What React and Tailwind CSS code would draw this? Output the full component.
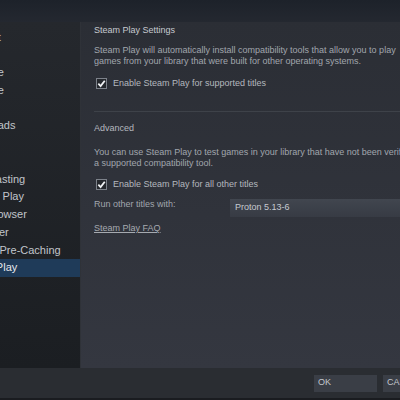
import React from 'react'

const sections = [
  'Account',
  'Family',
  'In-Game',
  'Interface',
  'Library',
  'Downloads',
  'Cloud',
  'Voice',
  'Broadcasting',
  'Remote Play',
  'Web Browser',
  'Controller',
  'Shader Pre-Caching',
  'Steam Play',
]

function Check() {
  return (
    <span className="ml-[2px] mr-[6px] flex h-[11px] w-[11px] items-center justify-center border border-[#7d828a] bg-[#25282d]">
      <svg width="9" height="9" viewBox="0 0 10 10">
        <path d="M1.5 5.2 L4 7.8 L8.6 2" fill="none" stroke="#f2f4f6" strokeWidth="2" />
      </svg>
    </span>
  )
}

export default function App() {
  return (
    <div className="h-[400px] w-[400px] overflow-hidden bg-[#1c1f23] font-['Liberation_Sans',Arial,sans-serif]">
      <div className="-ml-[45px] flex h-[400px] w-[500px] flex-col">
        {/* title bar */}
        <div className="h-[22px] bg-gradient-to-b from-[#1d222a] to-[#242830]" />

        <div className="flex h-[346px]">
          {/* left menu */}
          <div className="w-[126px] border-r border-[#2f3238] bg-gradient-to-b from-[#25282d] to-[#1b1e22] pt-[6px]">
            {sections.map((s) => (
              <div
                key={s}
                className={
                  s === 'Steam Play'
                    ? 'flex h-[17.75px] items-center whitespace-nowrap bg-[#1f3b59] pl-[6px] text-[11px] text-[#e6e9ee]'
                    : 'flex h-[17.75px] items-center whitespace-nowrap pl-[6px] text-[11px] text-[#c1c5cb]'
                }
              >
                {s}
              </div>
            ))}
          </div>

          {/* settings page */}
          <div className="flex-1 bg-gradient-to-b from-[#2b2e35] to-[#343740] px-[13px] text-[9px] leading-[11px]">
            <div className="mt-[2.5px] text-[#c6cad0]">Steam Play Settings</div>
            <div className="mt-[9px] whitespace-nowrap text-[#a1a6ad]">
              Steam Play will automatically install compatibility tools that allow you to play
              <br />
              games from your library that were built for other operating systems.
            </div>
            <div className="mt-[11px] flex items-center text-[#b4b8be]">
              <Check />
              Enable Steam Play for supported titles
            </div>

            <div className="mt-[22.5px] h-px bg-[#3e4249]" />

            <div className="mt-[10.5px] text-[#b4b8be]">Advanced</div>
            <div className="mt-[13.5px] whitespace-nowrap text-[#a1a6ad]">
              You can use Steam Play to test games in your library that have not been verified with
              <br />
              a supported compatibility tool.
            </div>
            <div className="mt-[9.5px] flex items-center text-[#b4b8be]">
              <Check />
              Enable Steam Play for all other titles
            </div>
            <div className="mt-[9px] flex items-start">
              <div className="w-[136px] text-[#a1a6ad]">Run other titles with:</div>
              <div className="flex h-[18.5px] w-[210px] items-center bg-gradient-to-b from-[#41464f] to-[#373b44] pl-[5px] text-[#c6cad0]">
                Proton 5.13-6
              </div>
            </div>
            <div className="mt-[6px] text-[#a6aab0] underline">Steam Play FAQ</div>
          </div>
        </div>

        {/* buttons */}
        <div className="flex h-[30px] items-center justify-end gap-[6px] bg-[#2a2d32] pr-[9px] text-[9px]">
          <div className="flex h-[17px] w-[63px] items-center bg-[#3a3e46] pl-[4px] text-[#c3c7cd]">OK</div>
          <div className="flex h-[17px] w-[63px] items-center bg-[#3a3e46] pl-[4px] text-[#c3c7cd]">CANCEL</div>
        </div>
        <div className="h-[2px] bg-[#1a1c20]" />
      </div>
    </div>
  )
}
